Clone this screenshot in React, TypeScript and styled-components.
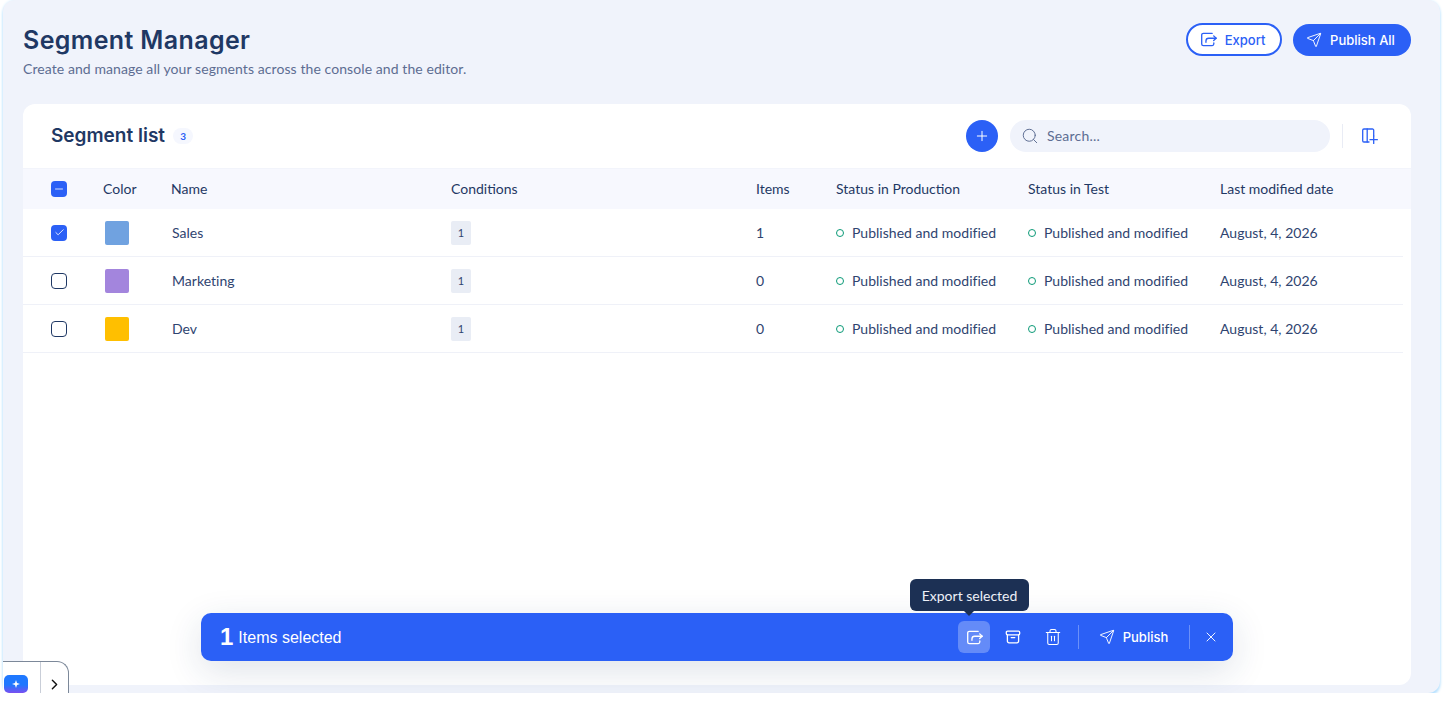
import React from 'react'
import styled, { createGlobalStyle } from 'styled-components'
import { Plus, Search, Trash2, X, ChevronRight, Send, Check, Minus } from 'lucide-react'

const BODY_FONT = `Lato, "Open Sans", sans-serif`
const HEAD_FONT = `Inter, "Open Sans", sans-serif`
const BLUE = '#2b60f6'
const NAVY = '#1f3864'

const GlobalStyle = createGlobalStyle`
  html, body {
    margin: 0;
    padding: 0;
    background: #fff;
    font-family: ${BODY_FONT};
  }
  * { box-sizing: border-box; }
`

const Frame = styled.div`
  position: relative;
  width: 1437px;
  height: 693px;
  margin-left: 3px;
  padding: 0 29px 8px 20px;
  display: flex;
  flex-direction: column;
  background: #f0f3fb;
  border-radius: 12px;
  box-shadow: 0 3px 3px #b4e0ff, 0 0 3px #d5edff;
`

const PageHeader = styled.header`
  height: 104px;
  display: flex;
  justify-content: space-between;
  align-items: flex-start;
  flex-shrink: 0;
`

const TitleBlock = styled.div`
  padding-top: 25px;
`

const Title = styled.h1`
  margin: 0;
  font-family: ${HEAD_FONT};
  font-size: 25px;
  line-height: 31px;
  font-weight: 600;
  letter-spacing: 0.37px;
  color: ${NAVY};
`

const Subtitle = styled.p`
  margin: 4px 0 0;
  font-size: 14px;
  line-height: 18px;
  letter-spacing: 0.08px;
  color: #5d6d92;
`

const HeaderActions = styled.div`
  display: flex;
  align-items: center;
  gap: 11px;
  padding-top: 23px;
`

const PillButton = styled.button<{ $outline?: boolean }>`
  display: flex;
  align-items: center;
  justify-content: center;
  gap: 8px;
  height: ${p => (p.$outline ? '33px' : '32px')};
  width: ${p => (p.$outline ? '96px' : '118px')};
  border-radius: 17px;
  padding: 0 3px 0 0;
  font-family: ${HEAD_FONT};
  font-size: 13px;
  font-weight: 500;
  color: ${p => (p.$outline ? BLUE : '#fff')};
  background: ${p => (p.$outline ? '#fff' : BLUE)};
  border: ${p => (p.$outline ? `2px solid ${BLUE}` : 'none')};
`

const Card = styled.section`
  flex: 1;
  display: flex;
  flex-direction: column;
  background: #fff;
  border-radius: 12px;
`

const CardHeader = styled.div`
  height: 65px;
  flex-shrink: 0;
  padding: 0 33px 1px 28px;
  display: flex;
  align-items: center;
  border-bottom: 1px solid #f2f4fb;
`

const CardTitle = styled.h2`
  margin: 0;
  font-family: ${HEAD_FONT};
  font-size: 19px;
  line-height: 24px;
  font-weight: 600;
  color: ${NAVY};
`

const CountBadge = styled.span`
  margin-left: 8px;
  width: 20px;
  height: 16px;
  border-radius: 8px;
  display: flex;
  align-items: center;
  justify-content: center;
  background: #f5f7fe;
  color: ${BLUE};
  font-size: 10px;
  font-weight: 700;
`

const CardTools = styled.div`
  margin-left: auto;
  display: flex;
  align-items: center;
`

const RoundAdd = styled.button`
  width: 32px;
  height: 32px;
  padding: 0;
  border: none;
  border-radius: 50%;
  display: flex;
  align-items: center;
  justify-content: center;
  background: ${BLUE};
  color: #fff;
`

const SearchBox = styled.div`
  margin-left: 12px;
  width: 320px;
  height: 32px;
  padding-left: 11px;
  border-radius: 16px;
  display: flex;
  align-items: center;
  gap: 8px;
  background: #f0f3fb;
  color: #5d6d92;
  font-size: 14px;
  letter-spacing: 0.2px;
`

const ToolDivider = styled.span`
  width: 1px;
  height: 24px;
  margin: 0 19px 0 12px;
  background: #e9ecf5;
`

const gridColumns = '52px 68px 280px 305px 80px 192px 192px 1fr'

const HeadRow = styled.div`
  height: 40px;
  flex-shrink: 0;
  padding-left: 28px;
  display: grid;
  grid-template-columns: ${gridColumns};
  align-items: center;
  background: #f7f8fe;
  font-size: 14px;
  color: ${NAVY};

  & > span:not(:first-child) {
    padding-bottom: 2px;
  }
`

const Row = styled.div`
  height: 48px;
  flex-shrink: 0;
  margin-right: 8px;
  padding-left: 28px;
  display: grid;
  grid-template-columns: ${gridColumns};
  align-items: center;
  border-bottom: 1px solid #eff1f8;
  font-size: 14px;
  letter-spacing: 0.02px;
  color: #2f4470;
`

const CheckBox = styled.span<{ $checked?: boolean }>`
  width: 16px;
  height: 16px;
  border-radius: 4px;
  display: flex;
  align-items: center;
  justify-content: center;
  color: #fff;
  background: ${p => (p.$checked ? BLUE : '#fff')};
  border: ${p => (p.$checked ? 'none' : `1.5px solid ${NAVY}`)};
`

const Swatch = styled.span<{ $color: string }>`
  display: block;
  width: 24px;
  height: 24px;
  margin-left: 2px;
  border-radius: 2px;
  background: ${p => p.$color};
`

const NameCell = styled.span`
  padding-left: 1px;
`

const ConditionChip = styled.span`
  width: 20px;
  height: 24px;
  border-radius: 2px;
  display: flex;
  align-items: center;
  justify-content: center;
  background: #e9edf5;
  font-size: 11px;
  color: #2f4470;
`

const Status = styled.span`
  display: flex;
  align-items: center;
  gap: 8px;
`

const StatusDot = styled.span`
  width: 8px;
  height: 8px;
  border-radius: 50%;
  border: 1.5px solid #0b9a77;
`

const BulkBar = styled.div`
  position: absolute;
  left: 198px;
  top: 613px;
  width: 1032px;
  height: 48px;
  padding: 0 6px 0 19px;
  display: flex;
  align-items: center;
  border-radius: 10px;
  background: ${BLUE};
  color: #fff;
  box-shadow: 0 10px 36px rgba(31, 56, 100, 0.14);
`

const BulkCount = styled.span`
  font-family: "Liberation Sans", sans-serif;
  font-size: 24px;
  font-weight: 700;
  line-height: 1;
`

const BulkLabel = styled.span`
  margin: 2px 0 0 5px;
  font-family: "Liberation Sans", sans-serif;
  font-size: 16px;
`

const BulkActions = styled.div`
  margin-left: auto;
  display: flex;
  align-items: center;
`

const IconButton = styled.button<{ $active?: boolean; $gap?: number }>`
  position: relative;
  width: 32px;
  height: 32px;
  margin-left: ${p => p.$gap ?? 0}px;
  padding: 0;
  border: none;
  border-radius: 6px;
  display: flex;
  align-items: center;
  justify-content: center;
  color: #fff;
  background: ${p => (p.$active ? 'rgba(255, 255, 255, 0.27)' : 'transparent')};
`

const BulkDivider = styled.span<{ $gap?: number }>`
  width: 1px;
  height: 24px;
  margin-left: ${p => p.$gap ?? 0}px;
  background: rgba(255, 255, 255, 0.3);
`

const PublishButton = styled.button`
  width: 110px;
  height: 32px;
  padding: 0 1px 0 0;
  border: none;
  display: flex;
  align-items: center;
  justify-content: center;
  gap: 8px;
  background: transparent;
  color: #fff;
  font-family: ${HEAD_FONT};
  font-size: 13px;
  font-weight: 500;
`

const Tooltip = styled.span`
  position: absolute;
  left: -48px;
  top: -42px;
  width: 119px;
  height: 32px;
  border-radius: 6px;
  display: flex;
  align-items: center;
  justify-content: center;
  background: #1c3054;
  color: #eef1f8;
  font-family: ${BODY_FONT};
  font-size: 14px;
  white-space: nowrap;

  &::after {
    content: '';
    position: absolute;
    left: 54px;
    bottom: -5px;
    border-left: 5px solid transparent;
    border-right: 5px solid transparent;
    border-top: 5px solid #1c3054;
  }
`

const AssistTab = styled.div`
  position: absolute;
  left: 0;
  bottom: 0;
  width: 66px;
  height: 32px;
  display: flex;
  background: #fff;
  border: 1px solid #7c8899;
  border-left: none;
  border-bottom: none;
  border-top-right-radius: 12px;
  overflow: hidden;
`

const AssistCell = styled.div`
  width: 38px;
  border-right: 1px solid #c9ced8;
  padding: 13px 0 0 1px;
`

const AssistPill = styled.span`
  width: 24px;
  height: 18px;
  border-radius: 5px;
  display: flex;
  align-items: center;
  justify-content: center;
  background: linear-gradient(180deg, #1f78ff 55%, #7a4ff0 100%);
`

const AssistArrow = styled.div`
  flex: 1;
  padding: 14px 0 0 5px;
  color: #111;
`

const ExportIcon = ({ size = 17 }: { size?: number }) => (
  <svg width={size} height={size} viewBox="0 0 16 16" fill="none" stroke="currentColor" strokeWidth="1.25" strokeLinecap="round" strokeLinejoin="round">
    <path d="M11.5 2.2H3.2a1.6 1.6 0 0 0-1.6 1.6v8.4a1.6 1.6 0 0 0 1.6 1.6h8.3a1.6 1.6 0 0 0 1.5-1.5v-1.2" />
    <path d="M5.6 10.6V9.4a2.6 2.6 0 0 1 2.6-2.6h7" />
    <path d="M12.9 4.6l2.3 2.2-2.3 2.2" />
  </svg>
)

const ArchiveIcon = () => (
  <svg width="16" height="16" viewBox="0 0 16 16" fill="none" stroke="currentColor" strokeWidth="1.3" strokeLinecap="round" strokeLinejoin="round">
    <rect x="1.3" y="2.2" width="13.4" height="3.6" rx="1.2" />
    <path d="M2.4 5.8v6.4a1.6 1.6 0 0 0 1.6 1.6h8a1.6 1.6 0 0 0 1.6-1.6V5.8" />
    <path d="M6.2 8.6h3.6" />
  </svg>
)

const AddColumnIcon = () => (
  <svg width="16" height="16" viewBox="0 0 16 16" fill="none" stroke={BLUE} strokeWidth="1.3" strokeLinecap="round" strokeLinejoin="round">
    <path d="M7 14H1.9A1.2 1.2 0 0 1 .7 12.8V2.2A1.2 1.2 0 0 1 1.9 1h8.6a1.2 1.2 0 0 1 1.2 1.2V8" />
    <path d="M5.2 1v13" />
    <path d="M11.7 8v7.4M8 11.7h7.4" />
  </svg>
)

const SparkIcon = () => (
  <svg width="8" height="8" viewBox="0 0 8 8" fill="#fff">
    <path d="M4 0l1 3 3 1-3 1-1 3-1-3-3-1 3-1z" />
  </svg>
)

const segments = [
  { name: 'Sales', color: '#70a2e0', items: 1, checked: true },
  { name: 'Marketing', color: '#a385dd', items: 0, checked: false },
  { name: 'Dev', color: '#ffbf00', items: 0, checked: false },
]

const STATUS = 'Published and modified'

export default function App() {
  return (
    <>
      <GlobalStyle />
      <Frame>
        <PageHeader>
          <TitleBlock>
            <Title>Segment Manager</Title>
            <Subtitle>Create and manage all your segments across the console and the editor.</Subtitle>
          </TitleBlock>
          <HeaderActions>
            <PillButton $outline><ExportIcon />Export</PillButton>
            <PillButton><Send size={16} strokeWidth={1.4} />Publish All</PillButton>
          </HeaderActions>
        </PageHeader>

        <Card>
          <CardHeader>
            <CardTitle>Segment list</CardTitle>
            <CountBadge>3</CountBadge>
            <CardTools>
              <RoundAdd><Plus size={16} strokeWidth={1.5} /></RoundAdd>
              <SearchBox><Search size={18} strokeWidth={1.3} />Search...</SearchBox>
              <ToolDivider />
              <AddColumnIcon />
            </CardTools>
          </CardHeader>

          <HeadRow>
            <CheckBox $checked><Minus size={12} strokeWidth={1.6} /></CheckBox>
            <span>Color</span>
            <span>Name</span>
            <span>Conditions</span>
            <span>Items</span>
            <span>Status in Production</span>
            <span>Status in Test</span>
            <span>Last modified date</span>
          </HeadRow>

          {segments.map(s => (
            <Row key={s.name}>
              <CheckBox $checked={s.checked}>
                {s.checked && <Check size={11} strokeWidth={1.8} />}
              </CheckBox>
              <Swatch $color={s.color} />
              <NameCell>{s.name}</NameCell>
              <ConditionChip>1</ConditionChip>
              <span>{s.items}</span>
              <Status><StatusDot />{STATUS}</Status>
              <Status><StatusDot />{STATUS}</Status>
              <span>August, 4, 2026</span>
            </Row>
          ))}
        </Card>

        <BulkBar>
          <BulkCount>1</BulkCount>
          <BulkLabel>Items selected</BulkLabel>
          <BulkActions>
            <IconButton $active>
              <ExportIcon />
              <Tooltip>Export selected</Tooltip>
            </IconButton>
            <IconButton $gap={7}><ArchiveIcon /></IconButton>
            <IconButton $gap={8}><Trash2 size={18} strokeWidth={1.4} /></IconButton>
            <BulkDivider $gap={9} />
            <PublishButton><Send size={16} strokeWidth={1.4} />Publish</PublishButton>
            <BulkDivider />
            <IconButton $gap={5}><X size={16} strokeWidth={1.4} /></IconButton>
          </BulkActions>
        </BulkBar>

        <AssistTab>
          <AssistCell><AssistPill><SparkIcon /></AssistPill></AssistCell>
          <AssistArrow><ChevronRight size={17} strokeWidth={2} /></AssistArrow>
        </AssistTab>
      </Frame>
    </>
  )
}
